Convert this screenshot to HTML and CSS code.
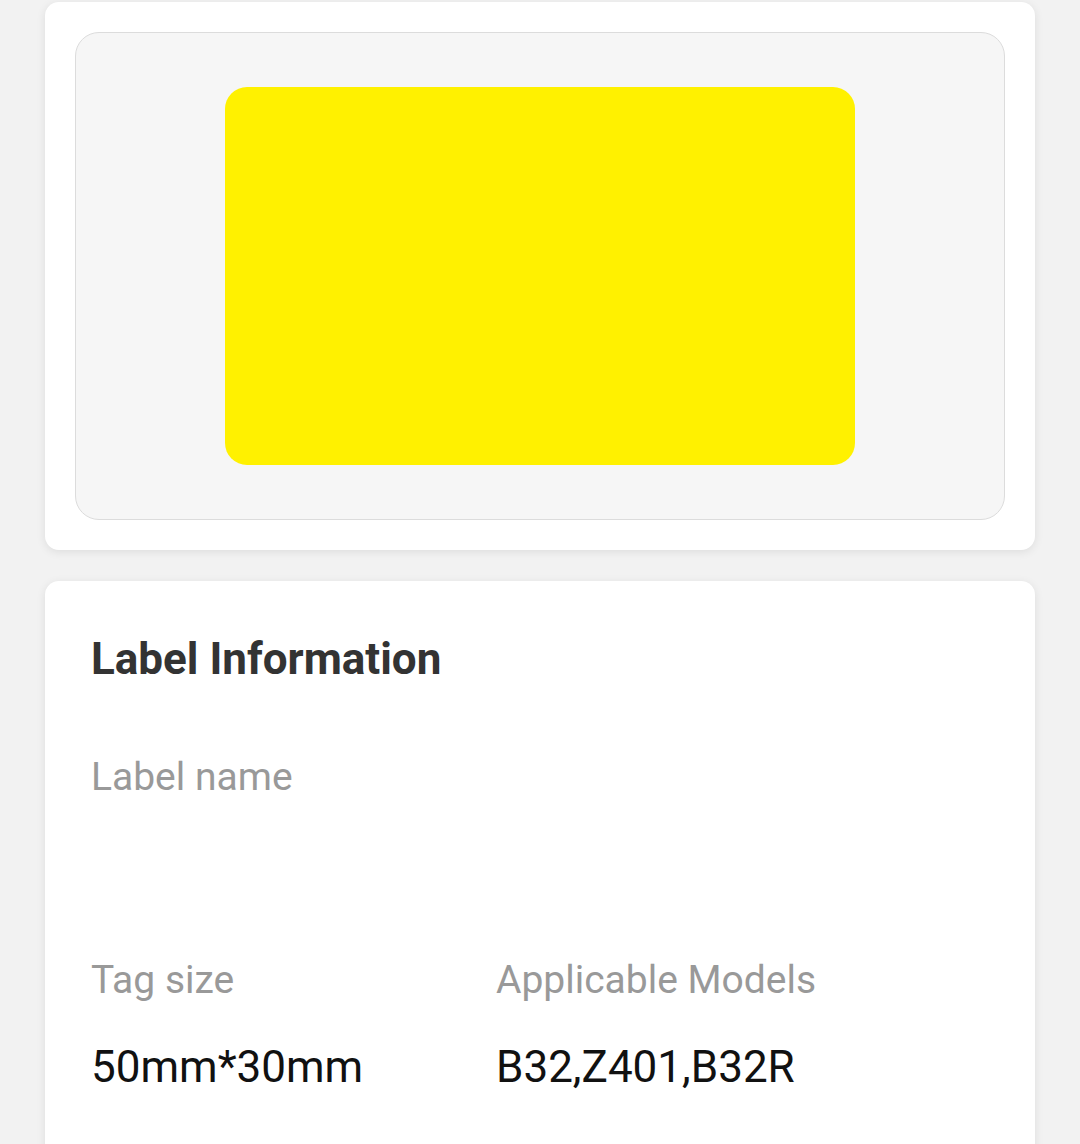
FILE: index.html
```html
<!DOCTYPE html>
<html lang="en">
<head>
  <meta charset="UTF-8">
  <meta name="viewport" content="width=device-width, initial-scale=1.0">
  <title>Label Details</title>
  <link rel="stylesheet" href="styles.css">
</head>
<body>
  <div class="page">
    <div class="card preview-card">
      <div class="preview">
        <div class="label-shape"></div>
      </div>
    </div>

    <div class="card info-card">
      <h2 class="info-title">Label Information</h2>
      <div class="field">
        <div class="field-label">Label name</div>
        <div class="field-value"></div>
      </div>
      <div class="field-row">
        <div class="field">
          <div class="field-label">Tag size</div>
          <div class="field-value">50mm*30mm</div>
        </div>
        <div class="field">
          <div class="field-label">Applicable Models</div>
          <div class="field-value">B32,Z401,B32R</div>
        </div>
      </div>
    </div>
  </div>
</body>
</html>
```

FILE: styles.css
```css
body {
  font-family: Roboto, "Noto Sans", Arial, sans-serif;
  margin: 0;
  padding: 0;
  background: #f2f2f2;
}
.page {
  padding: 2px 45px 0;
  display: flex;
  flex-direction: column;
  gap: 31px;
}
.card {
  background: #fff;
  border-radius: 14px;
  box-shadow: 0 2px 10px rgba(0, 0, 0, 0.09);
}
.preview-card {
  padding: 30px;
}
.preview {
  height: 486px;
  background: #f6f6f6;
  border: 1px solid #dcdcdc;
  border-radius: 24px;
  display: flex;
  align-items: center;
  justify-content: center;
}
.label-shape {
  width: 630px;
  height: 378px;
  background: #fff100;
  border-radius: 22px;
}
.info-card {
  padding: 50px 46px 60px;
  min-height: 600px;
}
.info-title {
  margin: 0;
  font-size: 44px;
  font-weight: 700;
  color: #333;
  line-height: 56px;
}
.field {
  margin-top: 68px;
}
.field-label {
  font-size: 39px;
  color: #999;
  line-height: 44px;
}
.field-value {
  min-height: 50px;
  margin-top: 40px;
  font-size: 44px;
  color: #111;
  line-height: 50px;
}
.field-row {
  display: grid;
  grid-template-columns: 405px 1fr;
}
.field-row .field {
  margin-top: 69px;
}
```
